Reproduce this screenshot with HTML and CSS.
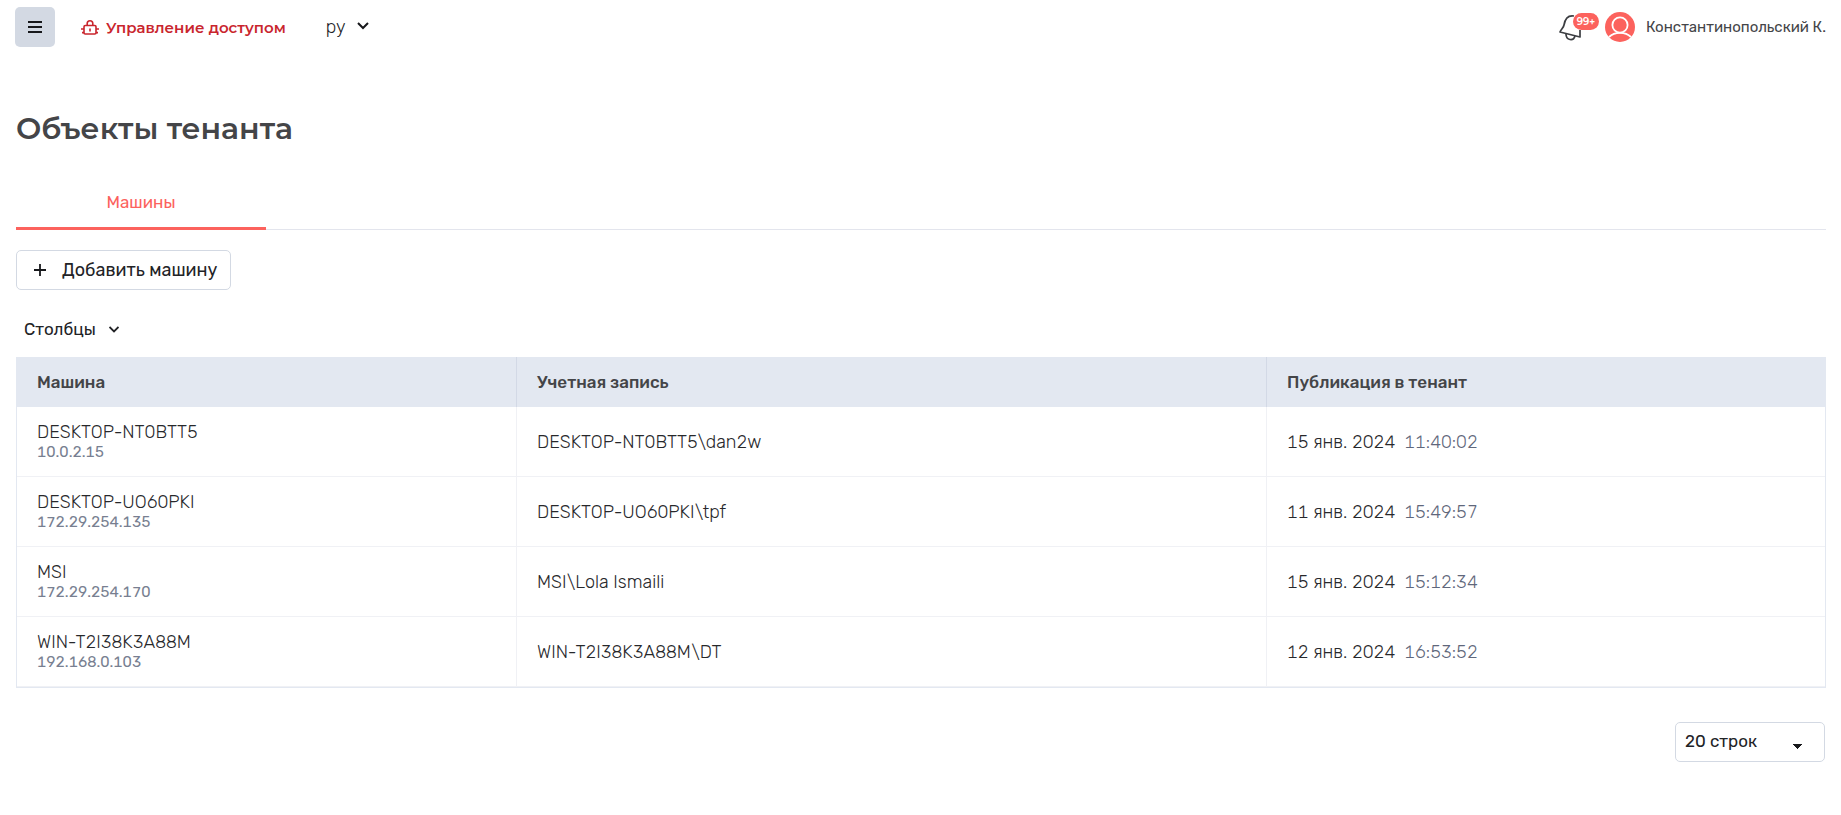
FILE: index.html
```html
<!DOCTYPE html>
<html lang="ru">
<head>
<meta charset="utf-8">
<title>Объекты тенанта</title>
<link rel="stylesheet" href="styles.css">
</head>
<body>
<header class="topbar">
  <button class="menu-button" type="button" aria-label="Меню">
    <svg width="14" height="14" viewBox="0 0 14 14"><path d="M0 2h14M0 7h14M0 12h14" stroke="#17181b" stroke-width="2"/></svg>
  </button>
  <a class="product" href="#">
    <svg width="18" height="16" viewBox="0 0 18 16" fill="none" stroke="#c9252d" stroke-width="1.6"><rect x="3" y="5.500" width="12" height="8.500" rx="1.2"/><path d="M6.200 5.500V3.600a2.800 2.800 0 0 1 5.600 0v1.900M0 9h3M1 12.600h2M15 9h3M15 12.600h2M9 8.500v3"/></svg>
    <span>Управление доступом</span>
  </a>
  <button class="language" type="button">
    <span>ру</span>
    <svg width="12" height="10" viewBox="0 0 12 10" fill="none" stroke="#17181b" stroke-width="2"><path d="M1 1l5 5 5-5"/></svg>
  </button>
  <div class="account">
    <button class="bell" type="button" aria-label="Уведомления">
      <svg width="26" height="28" viewBox="0 0 26 28" fill="none" stroke="#3c3e42" stroke-width="1.7" stroke-linejoin="round"><path d="M15 3C9 2 6 6 5 12c-.5 3-3 4-4 7l20 5v-7"/><path d="M7 21c0 6.500 7.500 7.500 9 2"/></svg>
      <span class="badge">99+</span>
    </button>
    <a class="user" href="#">
      <svg width="30" height="30" viewBox="0 0 30 30"><circle cx="15" cy="15" r="15" fill="#fc625d"/><g fill="none" stroke="#fff" stroke-width="1.8"><circle cx="15" cy="13" r="7.6"/><path d="M4 25c3-3 7-4.200 11-4.200S23 22 26 25"/></g></svg>
      <span>Константинопольский К.</span>
    </a>
  </div>
</header>
<main class="content">
  <h1 class="title">Объекты тенанта</h1>
  <nav class="tabs"><a class="tab" href="#" aria-current="page">Машины</a></nav>
  <button class="add-button" type="button">
    <svg width="12" height="12" viewBox="0 0 12 12"><path d="M6 0v12M0 6h12" stroke="#17181b" stroke-width="1.8"/></svg>
    <span>Добавить машину</span>
  </button>
  <button class="columns-button" type="button">
    <span>Столбцы</span>
    <svg width="10" height="7" viewBox="0 0 10 7" fill="none" stroke="#222326" stroke-width="1.8"><path d="M0.500 1L5 5.500 9.500 1"/></svg>
  </button>
  <table class="machines">
    <colgroup><col class="col-machine"><col class="col-account"><col class="col-date"></colgroup>
    <thead>
      <tr><th scope="col">Машина</th><th scope="col">Учетная запись</th><th scope="col">Публикация в тенант</th></tr>
    </thead>
    <tbody>
      <tr><td>DESKTOP-NT0BTT5<span class="ip">10.0.2.15</span></td><td>DESKTOP-NT0BTT5\dan2w</td><td>15 янв. 2024<span class="time">11:40:02</span></td></tr>
      <tr><td>DESKTOP-UO60PKI<span class="ip">172.29.254.135</span></td><td>DESKTOP-UO60PKI\tpf</td><td>11 янв. 2024<span class="time">15:49:57</span></td></tr>
      <tr><td>MSI<span class="ip">172.29.254.170</span></td><td>MSI\Lola Ismaili</td><td>15 янв. 2024<span class="time">15:12:34</span></td></tr>
      <tr><td>WIN-T2I38K3A88M<span class="ip">192.168.0.103</span></td><td>WIN-T2I38K3A88M\DT</td><td>12 янв. 2024<span class="time">16:53:52</span></td></tr>
    </tbody>
  </table>
  <footer class="pager">
    <select class="page-size" aria-label="Строк на странице"><option>20 строк</option><option>50 строк</option></select>
  </footer>
</main>
</body>
</html>
```
FILE: styles.css
```css
*, *::before, *::after { box-sizing: border-box; }

body {
  margin: 0;
  background: #fff;
  color: #444548;
  font: 400 17px/20px Rubik, Roboto, sans-serif;
}

button, select { font: inherit; color: #222326; background: none; border: 0; padding: 0; }
button { cursor: pointer; }
a { color: inherit; text-decoration: none; }
svg { display: block; flex: none; }

.topbar {
  display: flex;
  align-items: center;
  height: 54px;
  padding: 0 15px;
}

.menu-button {
  display: grid;
  place-items: center;
  width: 40px;
  height: 40px;
  border-radius: 5px;
  background: #d3d9e3;
}

.product {
  display: flex;
  align-items: center;
  gap: 7px;
  margin-left: 26px;
  padding-top: 2px;
  color: #c9252d;
  font: 600 15px/20px Montserrat, "Open Sans", sans-serif;
}

.language {
  display: flex;
  align-items: center;
  gap: 12px;
  margin-left: 40px;
  font-size: 18px;
  font-weight: 300;
}

.account {
  display: flex;
  align-items: center;
  gap: 20px;
  margin-left: auto;
}

.bell { position: relative; }

.badge {
  position: absolute;
  top: 0;
  left: 14px;
  width: 26px;
  height: 17px;
  border-radius: 9px;
  background: #fc625d;
  color: #fff;
  font: 600 10px/17px Montserrat, "Open Sans", sans-serif;
  text-align: center;
}

.user {
  display: flex;
  align-items: center;
  gap: 11px;
  font-size: 15px;
}

.content {
  display: flex;
  flex-direction: column;
  align-items: flex-start;
  padding: 55px 15px 0 16px;
}

.title {
  margin: 0;
  font: 600 30px/40px Montserrat, "Open Sans", sans-serif;
}

.tabs {
  display: flex;
  align-self: stretch;
  margin-top: 27px;
  border-bottom: 1px solid #e3e5ed;
}

.tab {
  width: 250px;
  margin-bottom: -1px;
  padding: 16px 0 15px;
  border-bottom: 3px solid #fc625d;
  color: #fc625d;
  text-align: center;
}

.add-button {
  display: flex;
  align-items: center;
  gap: 16px;
  height: 40px;
  margin-top: 20px;
  padding: 0 13px 0 17px;
  border: 1px solid #d3d9e3;
  border-radius: 5px;
  font-size: 18px;
}

.columns-button {
  display: flex;
  align-items: center;
  gap: 13px;
  height: 40px;
  margin: 19px 0 8px;
  padding: 0 8px;
}

.machines {
  width: 100%;
  table-layout: fixed;
  border-collapse: separate;
  border-spacing: 0;
  border: 1px solid #e3e8f1;
  border-top: 0;
  font-variant-numeric: tabular-nums;
}

.col-machine { width: 500px; }
.col-account { width: 750px; }

.machines th {
  height: 50px;
  padding: 0 20px;
  background: #e3e8f1;
  font-weight: 500;
  text-align: left;
}

.machines td {
  height: 70px;
  padding: 0 20px;
  border-bottom: 1px solid #f0f1f5;
  color: #27282b;
  font-size: 18px;
  font-weight: 300;
}

.machines td:not(:last-child) { border-right: 1px solid #f0f1f5; }
.machines th:not(:last-child) { border-right: 1px solid #d3d9e6; }

.ip {
  display: block;
  color: #787f91;
  font-size: 15px;
  font-weight: 400;
}

.time {
  margin-left: 9px;
  color: #5f677b;
}

.pager {
  display: flex;
  align-self: stretch;
  justify-content: flex-end;
  padding: 34px 1px 50px;
}

.page-size {
  appearance: none;
  width: 150px;
  height: 40px;
  padding: 0 40px 2px 9px;
  border: 1px solid #d3d9e3;
  border-radius: 5px;
  background: linear-gradient(to bottom right, #17181b 50%, transparent 50%) 122px 21px / 5px 5px no-repeat,
    linear-gradient(to bottom left, #17181b 50%, transparent 50%) 117px 21px / 5px 5px no-repeat;
}
```
